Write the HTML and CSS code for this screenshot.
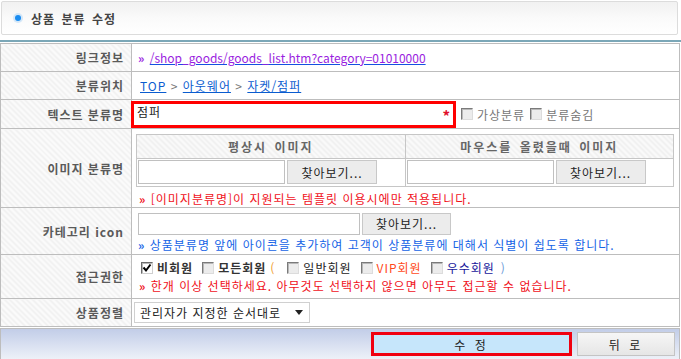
FILE: index.html
```html
<!DOCTYPE html>
<html lang="ko">
<head>
  <meta charset="UTF-8" />
  <title>상품 분류 수정</title>
  <link rel="stylesheet" href="styles.css">
</head>
<body>
  <div class="title-box">
    <span class="dot"></span>
    <h2>상품 분류 수정</h2>
  </div>
  <div class="title-line"></div>

  <table class="form-table">
    <tr class="r-link">
      <th>링크정보</th>
      <td><span class="raquo purple">»</span> <a class="url" href="#">/shop_goods/goods_list.htm?category=01010000</a></td>
    </tr>
    <tr class="r-pos">
      <th>분류위치</th>
      <td class="path"><a href="#">TOP</a> &gt; <a href="#">아웃웨어</a> &gt; <a href="#">자켓/점퍼</a></td>
    </tr>
    <tr class="r-name">
      <th>텍스트 분류명</th>
      <td class="name-cell">
        <div class="name-line">
          <div class="name-box">점퍼<span class="req">*</span></div>
          <label class="opt"><span class="chk off"></span>가상분류</label>
          <label class="opt"><span class="chk off"></span>분류숨김</label>
        </div>
      </td>
    </tr>
    <tr class="r-img">
      <th>이미지 분류명</th>
      <td>
        <table class="img-table">
          <tr>
            <th>평상시 이미지</th>
            <th>마우스를 올렸을때 이미지</th>
          </tr>
          <tr>
            <td><span class="file"></span><button class="btn-find">찾아보기...</button></td>
            <td><span class="file"></span><button class="btn-find">찾아보기...</button></td>
          </tr>
        </table>
        <p class="note red"><span class="raquo">»</span> [이미지분류명]이 지원되는 템플릿 이용시에만 적용됩니다.</p>
      </td>
    </tr>
    <tr class="r-icon">
      <th>카테고리 icon</th>
      <td>
        <div class="icon-line"><span class="file wide"></span><button class="btn-find">찾아보기...</button></div>
        <p class="note blue"><span class="raquo">»</span> 상품분류명 앞에 아이콘을 추가하여 고객이 상품분류에 대해서 식별이 쉽도록 합니다.</p>
      </td>
    </tr>
    <tr class="r-auth">
      <th>접근권한</th>
      <td>
        <div class="auth-line">
          <label class="opt strong"><span class="chk on">
            <svg width="10" height="10" viewBox="0 0 10 10"><path d="M1.5 4.5 L4 7.5 L8.5 1.5" fill="none" stroke="#000" stroke-width="2"/></svg>
          </span>비회원</label>
          <label class="opt strong"><span class="chk off"></span>모든회원</label>
          <span class="paren orange">(</span>
          <label class="opt dark"><span class="chk off"></span>일반회원</label>
          <label class="opt vip"><span class="chk off"></span>VIP회원</label>
          <label class="opt navy"><span class="chk off"></span>우수회원</label>
          <span class="paren sky">)</span>
        </div>
        <p class="note red"><span class="raquo">»</span> 한개 이상 선택하세요. 아무것도 선택하지 않으면 아무도 접근할 수 없습니다.</p>
      </td>
    </tr>
    <tr class="r-sort">
      <th>상품정렬</th>
      <td><span class="select">관리자가 지정한 순서대로<i class="arrow"></i></span></td>
    </tr>
  </table>

  <div class="btn-bar">
    <button class="btn-save">수 정</button>
    <button class="btn-back">뒤 로</button>
  </div>
</body>
</html>
```

FILE: styles.css
```css
body {
  margin: 0;
  padding: 0;
  font-family: "Noto Sans CJK KR", "Liberation Sans", sans-serif;
  font-size: 12px;
  letter-spacing: 1px;
  color: #333;
  background: #fff;
}
.title-box {
  margin: 1px 0 0 1px;
  width: 675px;
  height: 32px;
  border: 1px solid #dcdcdc;
  border-radius: 2px;
  background: linear-gradient(#f1f1f1, #fafafa 50%, #fff);
  display: flex;
  align-items: center;
}
.dot {
  width: 6px;
  height: 6px;
  margin: 0 10px 0 13px;
  border-radius: 50%;
  background: #1a8cf0;
  box-shadow: 0 0 0 2px #d4e7f8;
}
.title-box h2 {
  margin: 0;
  font-size: 12px;
  font-weight: bold;
  color: #444;
  letter-spacing: 1px;
  word-spacing: 2px;
}
.title-line {
  margin-top: 5px;
  height: 2px;
  background: #7ba7b7;
}
.form-table {
  margin-top: 1px;
  width: 680px;
  border-collapse: collapse;
  table-layout: fixed;
}
.form-table > tbody > tr > th,
.form-table > tbody > tr > td {
  border: 1px solid #bdbdbd;
  padding: 0 0 0 6px;
}
.form-table > tbody > tr > th {
  width: 123px;
  padding: 0 7px 0 0;
  text-align: right;
  font-weight: bold;
  color: #5a5a5a;
  background: repeating-linear-gradient(45deg, #f1f1f1 0, #f1f1f1 2px, #fbfbfb 2px, #fbfbfb 4px);
}
.r-link > * { height: 27px; }
.r-pos > * { height: 27px; }
.r-name > * { height: 28px; }
.r-img > * { height: 78px; }
.r-icon > * { height: 46px; }
.r-auth > * { height: 43px; }
.r-sort > * { height: 27px; }

.raquo {
  font-weight: bold;
  margin-right: 1px;
  letter-spacing: 0;
}
.purple { color: #9a1ee0; }
.url {
  color: #9a1ee0;
  letter-spacing: 0;
  text-decoration: underline;
  text-decoration-color: #1450e0;
}
.path { color: #777; padding-left: 8px !important; }
.path a {
  color: #0a5ccf;
  text-decoration: underline;
}

.name-cell { padding: 0 !important; }
.name-line {
  display: flex;
  align-items: center;
}
.name-box {
  box-sizing: border-box;
  width: 325px;
  height: 27px;
  margin-left: -1px;
  border: 3px solid #ff0000;
  padding: 0 0 0 3px;
  line-height: 16px;
  color: #222;
  position: relative;
}
.req {
  position: absolute;
  right: 2px;
  top: 4px;
  color: #e0102a;
  font-weight: bold;
  font-size: 15px;
}
.opt {
  display: inline-flex;
  align-items: center;
  color: #777;
  margin-left: 5px;
}
.chk {
  box-sizing: border-box;
  display: inline-flex;
  align-items: center;
  justify-content: center;
  width: 12px;
  height: 12px;
  margin-right: 4px;
  border: 1px solid;
  border-color: #7a7a7a #dcdcdc #dcdcdc #7a7a7a;
  box-shadow: inset 1px 1px 0 #b8b8b8;
}
.chk.off { background: #ececec; }
.chk.on {
  background: #fff;
  border-color: #6a6a6a #cfcfcf #cfcfcf #6a6a6a;
}

.img-table {
  width: 538px;
  margin: 4px 0 0 -2px;
  border-collapse: collapse;
  table-layout: fixed;
}
.img-table th,
.img-table td {
  border: 1px solid #c6c6c6;
  padding: 0;
}
.img-table th {
  height: 23px;
  font-weight: bold;
  color: #666;
  letter-spacing: 2px;
  word-spacing: 2px;
  background: repeating-linear-gradient(45deg, #f0f0f0 0, #f0f0f0 2px, #fafafa 2px, #fafafa 4px);
}
.img-table td {
  height: 27px;
  padding-left: 1px;
}
.img-table td .file { width: 147px; }
.file {
  box-sizing: border-box;
  display: inline-block;
  vertical-align: middle;
  width: 148px;
  height: 24px;
  border: 1px solid #c0c0c0;
  background: #fff;
}
.file.wide { width: 222px; height: 22px; }
.btn-find {
  box-sizing: border-box;
  vertical-align: middle;
  width: 90px;
  height: 24px;
  margin-left: 2px;
  padding: 0;
  border: 1px solid #c8c8c8;
  background: #ececec;
  font-family: inherit;
  font-size: 12px;
  letter-spacing: 1px;
  color: #222;
}
.icon-line { margin-top: 3px; }
.icon-line .btn-find { height: 22px; width: 89px; }
.note {
  margin: 3px 0 0;
  line-height: 16px;
}
.note.red { color: #f0101a; margin-left: 1px; }
.note.blue { color: #1463e6; margin-top: 2px; }
.r-img .note { margin-top: 4px; }
.r-icon td { padding-left: 6px !important; }

.auth-line {
  display: flex;
  align-items: center;
  padding-left: 3px;
  margin-bottom: 1px;
}
.auth-line .opt { margin-left: 0; margin-right: 9px; }
.auth-line .opt .chk { margin-right: 4px; }
.opt.strong { color: #333; font-weight: bold; }
.opt.dark { color: #222; }
.opt.vip { color: #ff4a1a; }
.opt.navy { color: #16169a; }
.paren { margin: 0 12px 0 -5px; }
.paren.orange { color: #f0a030; }
.paren.sky { color: #6a9ad8; margin: 0 0 0 -3px; }
.r-auth .note { margin-top: 2px; }

.r-sort td { padding-left: 2px !important; }
.select {
  box-sizing: border-box;
  display: inline-flex;
  align-items: center;
  width: 176px;
  height: 21px;
  padding: 0 6px 0 5px;
  border: 1px solid #d0d0d0;
  background: #fff;
  color: #222;
}
.arrow {
  margin-left: auto;
  border-left: 4px solid transparent;
  border-right: 4px solid transparent;
  border-top: 5px solid #222;
}

.btn-bar {
  box-sizing: border-box;
  margin-top: 1px;
  width: 680px;
  height: 32px;
  border: 1px solid #bdbdbd;
  background: linear-gradient(#c2cde8, #edf1f8);
  display: flex;
  align-items: center;
  justify-content: flex-end;
  padding-right: 4px;
  gap: 5px;
}
.btn-bar button {
  box-sizing: border-box;
  height: 24px;
  padding: 0;
  font-family: inherit;
  font-size: 12px;
  color: #222;
  letter-spacing: 3px;
}
.btn-save {
  width: 201px;
  border: 3px solid #f00010;
  background: #c6e6fb;
}
.btn-back {
  width: 98px;
  border: 1px solid #c4c4c4;
  background: linear-gradient(#f6f6f6, #e6e6e6);
}
```
